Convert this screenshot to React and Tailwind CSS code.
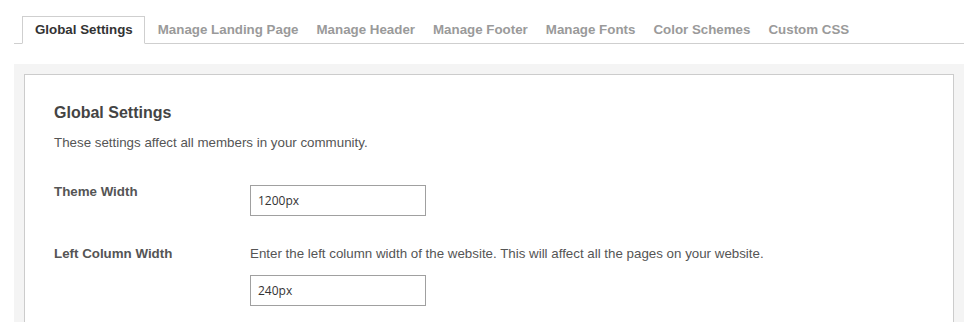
import React from 'react';

const tabs = [
  'Manage Landing Page',
  'Manage Header',
  'Manage Footer',
  'Manage Fonts',
  'Color Schemes',
  'Custom CSS',
];

export default function App() {
  return (
    <div className="min-h-[322px] bg-white font-['Liberation_Sans',Arial,sans-serif] px-[14px] pt-[16px] overflow-hidden">
      {/* tab strip */}
      <div className="flex items-end border-b border-[#cfcfcf] w-[950px]">
        <div className="ml-[8px] mr-[4px] -mb-px h-[28px] flex items-center pl-[12px] pr-[11px] border border-[#cfcfcf] border-b-white bg-white text-[13.33px] font-bold text-[#333]">
          Global Settings
        </div>
        {tabs.map((t) => (
          <div key={t} className="h-[27px] flex items-center px-[9px] text-[13.33px] font-bold text-[#9a9a9a]">
            {t}
          </div>
        ))}
      </div>

      {/* panel */}
      <div className="mt-[20px] w-[950px] bg-[#f4f4f4] pt-[10px] pl-[10px] pr-[10px] h-[260px]">
        <div className="bg-white border border-[#cccccc] h-full pl-[29px] pt-[29px]">
          <h2 className="text-[16px] font-bold text-[#444] leading-[18px]">Global Settings</h2>
          <p className="mt-[13px] text-[13.33px] text-[#555] leading-[16px]">
            These settings affect all members in your community.
          </p>

          <div className="mt-[32px] flex">
            <div className="w-[196px] pt-[1px] text-[13.33px] font-bold text-[#555] leading-[16px]">Theme Width</div>
            <div className="pt-[2px]">
              <div className="w-[176px] h-[31px] border border-[#a0a0a0] flex items-center px-[7px] text-[12px] text-[#333] font-['Open_Sans',sans-serif]">
                1200px
              </div>
            </div>
          </div>

          <div className="mt-[30px] flex">
            <div className="w-[196px] text-[13.33px] font-bold text-[#555] leading-[16px]">Left Column Width</div>
            <div>
              <p className="text-[13.33px] text-[#555] leading-[16px]">
                Enter the left column width of the website. This will affect all the pages on your website.
              </p>
              <div className="mt-[13px] w-[176px] h-[31px] border border-[#a0a0a0] flex items-center px-[7px] text-[12px] text-[#333] font-['Open_Sans',sans-serif]">
                240px
              </div>
            </div>
          </div>
        </div>
      </div>
    </div>
  );
}
